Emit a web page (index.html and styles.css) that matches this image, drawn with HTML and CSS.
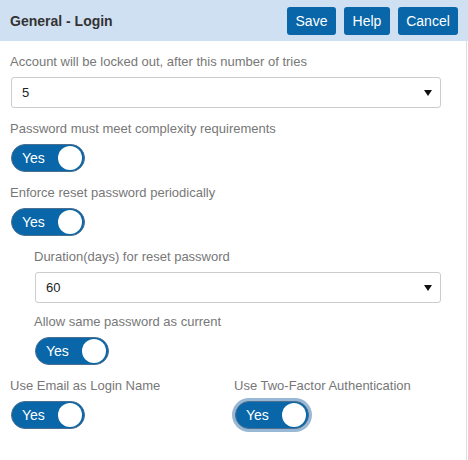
FILE: index.html
```html
<!DOCTYPE html>
<html>
<head>
<meta charset="utf-8">
<link rel="stylesheet" href="styles.css">
</head>
<body>
<div class="page">
  <div class="header">
    <div class="title">General - Login</div>
    <div class="actions">
      <button class="btn btn-save">Save</button>
      <button class="btn btn-help">Help</button>
      <button class="btn btn-cancel">Cancel</button>
    </div>
  </div>
  <div class="body">
    <div class="group">
      <div class="label">Account will be locked out, after this number of tries</div>
      <div class="select"><span>5</span><i class="caret"></i></div>
    </div>
    <div class="group">
      <div class="label">Password must meet complexity requirements</div>
      <div class="toggle"><span>Yes</span><i class="knob"></i></div>
    </div>
    <div class="group">
      <div class="label">Enforce reset password periodically</div>
      <div class="toggle"><span>Yes</span><i class="knob"></i></div>
    </div>
    <div class="nested">
      <div class="group">
        <div class="label">Duration(days) for reset password</div>
        <div class="select"><span>60</span><i class="caret"></i></div>
      </div>
      <div class="group">
        <div class="label">Allow same password as current</div>
        <div class="toggle"><span>Yes</span><i class="knob"></i></div>
      </div>
    </div>
    <div class="cols">
      <div class="group">
        <div class="label">Use Email as Login Name</div>
        <div class="toggle"><span>Yes</span><i class="knob"></i></div>
      </div>
      <div class="group">
        <div class="label">Use Two-Factor Authentication</div>
        <div class="toggle focused"><span>Yes</span><i class="knob"></i></div>
      </div>
    </div>
  </div>
</div>
</body>
</html>
```

FILE: styles.css
```css
html, body {
  margin: 0;
  padding: 0;
  background: #fff;
}
body {
  font-family: "Liberation Sans", Arial, sans-serif;
  width: 468px;
  height: 460px;
  overflow: hidden;
}
.page {
  width: 468px;
  height: 460px;
  display: flex;
  flex-direction: column;
}
.header {
  height: 41px;
  background: #cfe0f3;
  display: flex;
  align-items: center;
  justify-content: space-between;
  padding: 0 10px;
  flex-shrink: 0;
}
.title {
  font-size: 14px;
  font-weight: bold;
  color: #333;
}
.actions {
  display: flex;
  gap: 8px;
}
.btn {
  height: 28px;
  padding: 0;
  border: none;
  border-radius: 3px;
  background: #0966a8;
  color: #fff;
  font-family: "Liberation Sans", Arial, sans-serif;
  font-size: 14px;
  line-height: 28px;
  text-align: center;
}
.btn-save { width: 49px; }
.btn-help { width: 46px; }
.btn-cancel { width: 60px; }
.body {
  flex: 1;
  width: 467px;
  border-right: 1px solid #ddd;
  padding: 13px 0 0 10px;
  box-sizing: border-box;
}
.group {
  margin-bottom: 13px;
}
.label {
  font-size: 13px;
  line-height: 16px;
  color: #777;
  margin-bottom: 7px;
}
.select {
  margin-left: 1px;
  margin-top: 1px;
  width: 430px;
  height: 31px;
  box-sizing: border-box;
  border: 1px solid #ccc;
  border-radius: 3px;
  display: flex;
  align-items: center;
  justify-content: space-between;
  padding: 0 8px 0 10px;
  font-size: 13px;
  color: #222;
}
.caret {
  width: 0;
  height: 0;
  border-left: 4px solid transparent;
  border-right: 4px solid transparent;
  border-top: 6px solid #111;
}
.nested {
  padding-left: 24px;
}
.nested .group:first-child {
  margin-bottom: 11px;
}
.nested .select {
  width: 406px;
}
.toggle {
  margin-left: 1px;
  width: 74px;
  height: 28px;
  box-sizing: border-box;
  border-radius: 14px;
  background: #0966a8;
  border: 1px solid #4d6f8f;
  display: flex;
  align-items: center;
  justify-content: space-between;
  padding: 0 2px 0 10px;
  color: #fff;
  font-size: 14px;
}
.toggle.focused {
  box-shadow: 0 0 0 3px #98b8d6;
}
.knob {
  width: 24px;
  height: 24px;
  border-radius: 50%;
  background: #fff;
}
.cols {
  display: grid;
  grid-template-columns: 224px 224px;
}
```
